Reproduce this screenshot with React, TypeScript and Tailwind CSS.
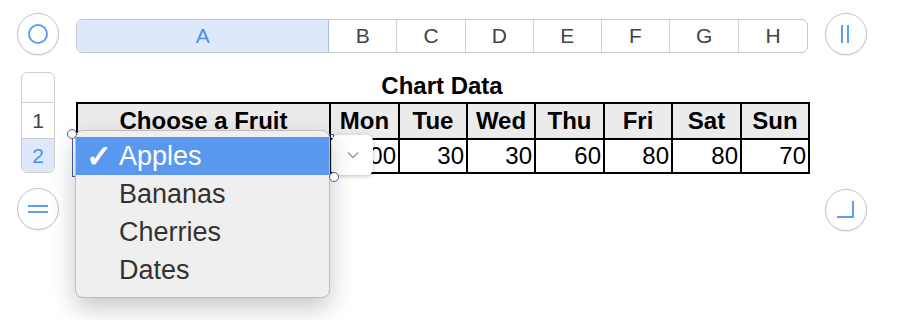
import React from "react";

const cols = ["A", "B", "C", "D", "E", "F", "G", "H"];
const colW = [253, 68, 69, 68, 68, 69, 69, 68];
const heads = ["Mon", "Tue", "Wed", "Thu", "Fri", "Sat", "Sun"];
const vals = ["100", "30", "30", "60", "80", "80", "70"];
const tW = [253, 69, 68, 68, 69, 68, 69, 68];

function Circle({ children }: { children?: React.ReactNode }) {
  return (
    <div className="w-[42px] h-[42px] rounded-full border border-[#c4c4c4] bg-white flex items-center justify-center shadow-[0_1px_1px_rgba(0,0,0,0.08)]">
      {children}
    </div>
  );
}

export default function App() {
  return (
    <div
      className="relative w-[898px] h-[320px] bg-white overflow-hidden"
      style={{ fontFamily: '"Liberation Sans", Arial, sans-serif' }}
    >
      <div className="flex pl-[17px] pt-[13px] gap-[17px]">
        {/* left column */}
        <div className="flex flex-col items-center w-[42px]">
          <Circle>
            <div className="w-[20px] h-[20px] rounded-full border-2 border-[#5ba0f2]" />
          </Circle>
          <div className="mt-[17px] w-[34px] h-[101px] rounded-md border border-[#cfcfcf] overflow-hidden flex flex-col bg-white">
            <div className="h-[30px] border-b border-[#cfcfcf]" />
            <div className="h-[36px] border-b border-[#cfcfcf] flex items-center justify-center text-[21px] text-[#444]">1</div>
            <div className="flex-1 bg-[#dde9fa] flex items-center justify-center text-[21px] text-[#4a90e8]">2</div>
          </div>
          <div className="mt-[15px]">
            <Circle>
              <div className="flex flex-col gap-[4px]">
                <div className="w-[20px] h-[2px] bg-[#5ba0f2]" />
                <div className="w-[20px] h-[2px] bg-[#5ba0f2]" />
              </div>
            </Circle>
          </div>
        </div>

        {/* middle column */}
        <div className="flex flex-col w-[732px]">
          <div className="mt-[6px] h-[34px] flex rounded-md border border-[#c9c9c9] overflow-hidden bg-white">
            {cols.map((c, i) => (
              <div
                key={c}
                style={{ width: colW[i] }}
                className={
                  i === 0
                    ? "h-full flex items-center justify-center bg-[#dde9fa] text-[#4a90e8] text-[21px] border-r border-[#a9bedb]"
                    : i === cols.length - 1
                    ? "h-full flex items-center justify-center text-[#444] text-[21px]"
                    : "h-full flex items-center justify-center text-[#444] text-[21px] border-r border-[#d0d0d0]"
                }
              >
                {c}
              </div>
            ))}
          </div>
          <div className="h-[49px] flex items-end justify-center pb-[4px]">
            <span className="text-[24px] font-bold text-black leading-none">Chart Data</span>
          </div>
          <table className="table-fixed border-collapse border-2 border-black w-[732px]">
            <colgroup>
              {tW.map((w, i) => (
                <col key={i} style={{ width: w }} />
              ))}
            </colgroup>
            <tbody>
              <tr className="h-[36px] bg-[#ebebeb]">
                <td className="border-2 border-black text-center font-bold text-[24px] leading-none text-black p-0">Choose a Fruit</td>
                {heads.map((h) => (
                  <td key={h} className="border-2 border-black text-center font-bold text-[24px] leading-none text-black p-0">
                    {h}
                  </td>
                ))}
              </tr>
              <tr className="h-[34px] bg-white">
                <td className="border-2 border-black text-left text-[24px] leading-none text-black px-1">Apples</td>
                {vals.map((v, i) => (
                  <td key={i} className="border-2 border-black text-right text-[24px] leading-none text-black pr-[2px] pl-0 py-0">
                    {v}
                  </td>
                ))}
              </tr>
            </tbody>
          </table>
        </div>

        {/* right column */}
        <div className="flex flex-col w-[42px]">
          <Circle>
            <div className="flex gap-[4px] mr-[2px]">
              <div className="w-[2px] h-[18px] bg-[#5ba0f2]" />
              <div className="w-[2px] h-[18px] bg-[#5ba0f2]" />
            </div>
          </Circle>
          <div className="mt-[134px]">
            <Circle>
              <div className="w-[17px] h-[17px] border-r-2 border-b-2 border-[#5ba0f2] mt-[-2px] ml-[-2px]" />
            </Circle>
          </div>
        </div>
      </div>

      {/* selection rectangle */}
      <div className="absolute left-[72px] top-[134px] w-[262px] h-[43px] border-[1.5px] border-[#3d63a8]" />

      {/* popup button */}
      <div className="absolute left-[332px] top-[135px] w-[41px] h-[40px] rounded-md bg-white shadow-[0_1px_4px_rgba(0,0,0,0.25)] flex items-center justify-center">
        <svg width="12" height="8" viewBox="0 0 12 8">
          <path d="M1 1.5 L6 6.5 L11 1.5" fill="none" stroke="#9a9a9a" strokeWidth="1.4" />
        </svg>
      </div>

      {/* dropdown menu */}
      <div className="absolute left-[75px] top-[130px] w-[255px] h-[168px] rounded-lg bg-[#efefef] border border-[#bdbdbd] shadow-[0_10px_24px_rgba(0,0,0,0.22)] pt-[6px] overflow-hidden">
        <div className="h-[38px] bg-[#5a98f0] flex items-center text-white text-[27px]">
          <span className="w-[43px] pl-[10px] font-bold text-[31px] leading-none">✓</span>
          <span className="leading-none">Apples</span>
        </div>
        {["Bananas", "Cherries", "Dates"].map((f) => (
          <div key={f} className="h-[38px] flex items-center text-[#333] text-[27px] leading-none pl-[43px]">
            {f}
          </div>
        ))}
      </div>

      {/* handles */}
      <div className="absolute left-[67px] top-[129px] w-[10px] h-[10px] rounded-full bg-white border-[1.5px] border-[#4a5f8c]" />
      <div className="absolute left-[329px] top-[172px] w-[10px] h-[10px] rounded-full bg-white border-[1.5px] border-[#4a5f8c]" />
    </div>
  );
}
